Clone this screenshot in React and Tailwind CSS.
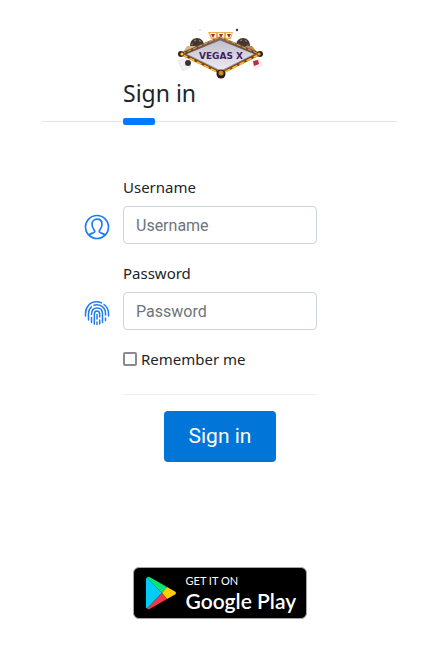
import React, { useState } from 'react';

function VegasLogo() {
  return (
    <svg viewBox="0 0 110 65" className="h-[65px] w-[110px]" role="img" aria-label="Vegas X">
      <defs>
        <linearGradient id="gold" x1="0" y1="0" x2="0" y2="1">
          <stop offset="0" stopColor="#8f6a46" />
          <stop offset="0.5" stopColor="#6b3c18" />
          <stop offset="1" stopColor="#8a5512" />
        </linearGradient>
        <linearGradient id="plate" x1="0" y1="0" x2="0" y2="1">
          <stop offset="0" stopColor="#bdbaca" />
          <stop offset="1" stopColor="#f1eff5" />
        </linearGradient>
      </defs>
      <circle cx="32" cy="25" r="7" fill="#43382f" />
      <circle cx="32" cy="25" r="5" fill="none" stroke="#8e7a5c" strokeWidth="1.2" strokeDasharray="2 3" />
      <circle cx="78" cy="25" r="7" fill="#43382f" />
      <circle cx="78" cy="25" r="5" fill="none" stroke="#8e7a5c" strokeWidth="1.2" strokeDasharray="2 3" />
      <path d="M22 26h9l-5 6h-8z" fill="#d6b984" />
      <path d="M80 26h7l5 6h-8z" fill="#b98c4b" />
      <path d="M43 12h25l-2 7H46z" fill="#e6b254" />
      <path d="M45 13h6v5h-4zM53 13h6v5h-6zM61 13h6l-2 5h-4z" fill="#fff2d8" />
      <path d="M46 14h4l-2 4zM54 14h4l-2 4zM62 14h4l-2 4z" fill="#a52b32" />
      <path d="M13 41l8-3 5 9-8 4z" fill="#f2f0f3" stroke="#d9d6dc" strokeWidth="0.5" />
      <circle cx="23" cy="43" r="3" fill="#3b3034" />
      <path d="M87 41l8-3 3 8-9 4z" fill="#f6eced" />
      <path d="M88 41l5-1 1 4-5 2z" fill="#b92c43" />
      <path d="M55 18L94 34L56 53L17 34Z" fill="url(#plate)" stroke="url(#gold)" strokeWidth="3" strokeLinejoin="round" />
      <path d="M55 20L90 34L56 51L21 34Z" fill="none" stroke="#4a3440" strokeWidth="0.5" />
      <path d="M17 34L55 17L94 34" fill="none" stroke="#dfb98b" strokeWidth="0.8" strokeDasharray="4 2" />
      <path d="M18 35L56 54L93 35" fill="none" stroke="#ffb52c" strokeWidth="1.8" strokeLinecap="round" strokeDasharray="4 4" />
      <circle cx="16" cy="34" r="3" fill="#3a2411" />
      <circle cx="17" cy="34" r="1.6" fill="#f8c75e" />
      <circle cx="95" cy="34" r="3" fill="#3a2411" />
      <circle cx="94" cy="34" r="1.6" fill="#f2a625" />
      <circle cx="56" cy="54" r="4.5" fill="#2d1d10" />
      <circle cx="56" cy="53" r="2.5" fill="#c88a25" />
      <circle cx="72" cy="10" r="1.2" fill="#34303c" />
      <circle cx="35" cy="10" r="0.5" fill="#77717a" />
      <text x="56" y="39" textAnchor="middle" fontSize="9" fontWeight="700" fill="#43205c" fontFamily="DejaVu Sans, sans-serif">
        VEGAS X
      </text>
    </svg>
  );
}

function UserIcon() {
  return (
    <svg viewBox="0 0 26 26" className="size-[26px]" fill="none" stroke="#1f7cf0" strokeWidth="1.7" aria-hidden="true">
      <circle cx="13" cy="13" r="11.5" />
      <path d="M5 21c1.200-1.300 3-1.500 4.500-2.200 1.400-.6 1.500-1.800.7-2.800C8.800 14.300 8 12.500 8 10.300 8 7 10 5.200 13 5.200s5 1.800 5 5.100c0 2.200-.8 4-2.200 5.700-.8 1-.7 2.200.7 2.800 1.500.7 3.300.9 4.500 2.200" />
    </svg>
  );
}

function FingerprintIcon() {
  return (
    <svg viewBox="0 0 26 26" className="size-[26px]" fill="none" stroke="#1f7cf0" strokeWidth="1.5" strokeLinecap="round" aria-hidden="true">
      <path d="M1.500 16v-2.500C1.500 7 6 1.700 12.500 1.700c2 0 3.500.4 5 1.200M20 4.500c3 2.300 4.500 5.500 4.500 9V16" />
      <path d="M4.500 20v-6c0-3 1-5.500 3-7.200M10 5.300c5-1.800 11.500 1.500 11.500 8.200v1.500M21.500 18v2.500" />
      <path d="M7.500 22.500v-5M7.500 14.500C7.500 10.500 9.700 8 13 8c3.500 0 5.500 2.500 5.500 6v8.500" />
      <path d="M10.300 24v-9.500c0-2 .9-3.500 2.700-3.500s2.700 1.500 2.700 3.500V17M15.700 20v4" />
      <path d="M13 14.500V19M13 22v2.500" />
    </svg>
  );
}

function PlayIcon() {
  return (
    <svg viewBox="0 0 30 34" className="h-[34px] w-[30px] shrink-0" aria-hidden="true">
      <path d="M1 1.500Q0 2 0 3v28q0 1 1 1.500L16 17Z" fill="#00cdf7" />
      <path d="M1 1.500Q2 0 4 1.200L21 11l-5 6Z" fill="#00e878" />
      <path d="M21 11l8 4.500q2 1.500 0 3L21 23l-5-6Z" fill="#ffce00" />
      <path d="M1 32.500Q2 34 4 32.800L21 23l-5-6Z" fill="#f0384b" />
    </svg>
  );
}

function Field({ id, label, type, icon, value, onChange }) {
  return (
    <div className="relative">
      <label htmlFor={id} className="mb-[7px] block text-[15px] leading-6">
        {label}
      </label>
      <input
        id={id}
        type={type}
        placeholder={label}
        value={value}
        onChange={(e) => onChange(e.target.value)}
        className="block h-[38px] w-full rounded border border-[#ced4da] px-3 font-[Roboto,sans-serif] text-base text-[#495057] placeholder:text-[#6c757d] focus:outline-none focus:ring-2 focus:ring-blue-300"
      />
      <span className="absolute right-full bottom-1 mr-[13px]">{icon}</span>
    </div>
  );
}

export default function App() {
  const [username, setUsername] = useState('');
  const [password, setPassword] = useState('');
  const [remember, setRemember] = useState(false);

  return (
    <main className="bg-white pt-5 pr-11 pb-6 pl-[42px] font-['Noto_Sans',sans-serif] text-[#212529]">
      <header>
        <div className="flex justify-center">
          <VegasLogo />
        </div>
        <div className="-mt-2 border-b border-[#e3e5e8] px-[81px] pb-3">
          <h1 className="text-[23px] leading-8">Sign in</h1>
        </div>
        <div className="-mt-1 ml-[81px] h-[7px] w-8 rounded-xs bg-[#007bff]" />
      </header>

      <form className="mt-[50px] pr-20 pl-[81px]" onSubmit={(e) => e.preventDefault()}>
        <div className="flex flex-col gap-[17px]">
          <Field id="username" label="Username" type="text" icon={<UserIcon />} value={username} onChange={setUsername} />
          <Field id="password" label="Password" type="password" icon={<FingerprintIcon />} value={password} onChange={setPassword} />
          <label className="flex items-center gap-1 text-[15px] leading-6">
            <input
              type="checkbox"
              checked={remember}
              onChange={(e) => setRemember(e.target.checked)}
              className="size-[14px] appearance-none rounded-xs border-2 border-[#8a8a94] checked:bg-[#007bff]"
            />
            Remember me
          </label>
        </div>
        <div className="mt-[23px] flex justify-center border-t border-[#eeeeee] pt-4">
          <button
            type="submit"
            className="rounded bg-[#0275d8] px-[25px] py-3 font-[Roboto,sans-serif] text-[21px] leading-[27px] text-white hover:bg-[#025aa5]"
          >
            Sign in
          </button>
        </div>
      </form>

      <footer className="mt-[105px] flex justify-center">
        <a
          href="#"
          className="flex h-[52px] w-[174px] items-center gap-2.5 rounded-md border border-[#a6a6a6] bg-black pl-3 font-[Lato,sans-serif] text-white"
        >
          <PlayIcon />
          <span className="flex flex-col gap-1 whitespace-nowrap">
            <span className="text-[11px] leading-3">GET IT ON</span>
            <span className="text-[21px] leading-5 font-semibold">Google Play</span>
          </span>
        </a>
      </footer>
    </main>
  );
}
